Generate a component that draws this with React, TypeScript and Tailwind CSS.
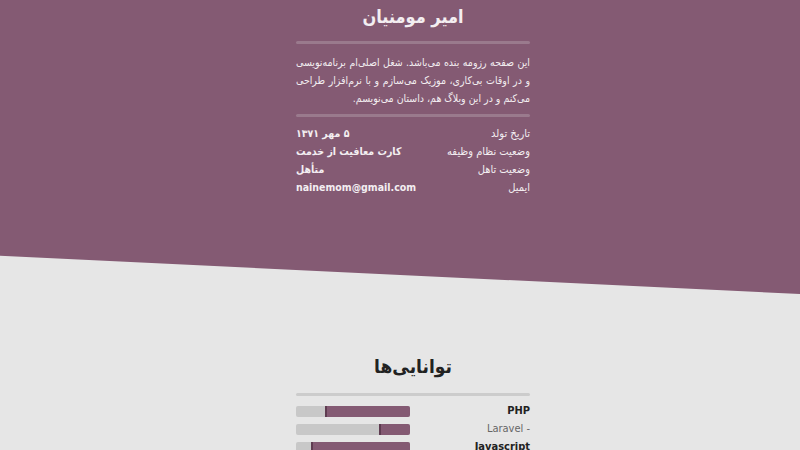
import React from "react";

const info = [
  { label: "تاریخ تولد", value: "۵ مهر ۱۳۷۱" },
  { label: "وضعیت نظام وظیفه", value: "کارت معافیت از خدمت" },
  { label: "وضعیت تاهل", value: "متأهل" },
  { label: "ایمیل", value: "nainemom@gmail.com" },
];

const skills = [
  { name: "PHP", level: 75, main: true },
  { name: "Laravel -", level: 27, main: false },
  { name: "Javascript", level: 87, main: true },
];

export default function App() {
  return (
    <div className="min-h-[450px] bg-[#e6e6e6] overflow-hidden" style={{ fontFamily: "Tahoma, 'DejaVu Sans Condensed', 'DejaVu Sans', sans-serif" }}>
      <header className="bg-[#845a73] [clip-path:polygon(0_0,100%_0,100%_100%,0_87%)] h-[294px] flex justify-center pl-[26px]">
        <div dir="rtl" className="w-[234px] pt-[5px] text-[#f3eef1]">
          <h1 className="text-center text-[18px] font-bold leading-[24px]">امیر مومنیان</h1>
          <div className="mt-[12px] h-[3px] bg-[#9a7a8d] rounded-full" />
          <p className="mt-[9px] text-[10.5px] leading-[18px] text-justify">
            این صفحه رزومه بنده می‌باشد. شغل اصلی‌ام برنامه‌نویسی و در اوقات بی‌کاری، موزیک می‌سازم و با نرم‌افزار طراحی می‌کنم و در این وبلاگ هم، داستان می‌نویسم.
          </p>
          <div className="mt-[7px] h-[3px] bg-[#9a7a8d] rounded-full" />
          <div className="mt-[8px] flex flex-col">
            {info.map((row) => (
              <div key={row.label} className="flex justify-between items-center h-[18px] text-[11px]">
                <span>{row.label}</span>
                <span className="font-bold text-[10.5px]" dir={row.value.includes("@") ? "ltr" : "rtl"}>{row.value}</span>
              </div>
            ))}
          </div>
        </div>
      </header>

      <section className="flex justify-center pl-[26px] mt-[59px]">
        <div dir="rtl" className="w-[234px]">
          <h2 className="text-center text-[19px] font-bold leading-[26px] text-[#222]">توانایی‌ها</h2>
          <div className="mt-[14px] h-[3px] bg-[#cccccc] rounded-full" />
          <div className="mt-[8px] flex flex-col gap-[4px]">
            {skills.map((s) => (
              <div key={s.name} className="flex justify-between items-center h-[14px]">
                <span className={s.main ? "text-[11px] font-bold text-[#222]" : "text-[11px] text-[#666]"} dir="ltr">
                  {s.name}
                </span>
                <div className="w-[114px] h-[11px] rounded-[2px] bg-[#c8c8c8] overflow-hidden flex">
                  <div className="h-full bg-[#845a73] border-l-[2px] border-[#5f3c51]" style={{ width: `${s.level}%` }} />
                </div>
              </div>
            ))}
          </div>
        </div>
      </section>
    </div>
  );
}
